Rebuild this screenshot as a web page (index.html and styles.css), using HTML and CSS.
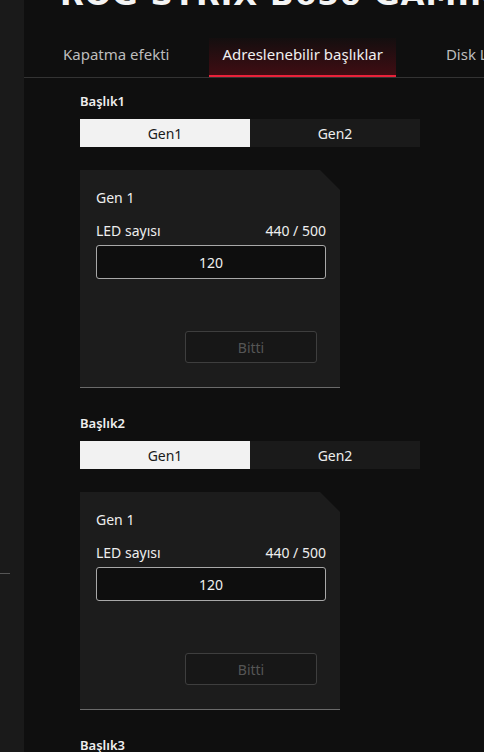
FILE: index.html
```html
<!DOCTYPE html>
<html>
<head>
<meta charset="utf-8">
<link rel="stylesheet" href="styles.css">
</head>
<body>
<div class="app">
  <aside class="sidebar"><div class="side-line"></div></aside>
  <main class="main">
    <header class="title-bar"><div class="title">ROG STRIX B650 GAMING</div></header>
    <nav class="tabs">
      <div class="tab t1">Kapatma efekti</div>
      <div class="tab active">Adreslenebilir başlıklar</div>
      <div class="tab t3">Disk LED</div>
    </nav>
    <div class="content">
      <section class="block">
        <div class="head">Başlık1</div>
        <div class="seg"><div class="seg-item on">Gen1</div><div class="seg-item">Gen2</div></div>
        <div class="card">
          <div class="card-title">Gen 1</div>
          <div class="row"><span>LED sayısı</span><span>440 / 500</span></div>
          <div class="input">120</div>
          <div class="btn-row"><div class="btn">Bitti</div></div>
        </div>
      </section>
      <section class="block">
        <div class="head">Başlık2</div>
        <div class="seg"><div class="seg-item on">Gen1</div><div class="seg-item">Gen2</div></div>
        <div class="card">
          <div class="card-title">Gen 1</div>
          <div class="row"><span>LED sayısı</span><span>440 / 500</span></div>
          <div class="input">120</div>
          <div class="btn-row"><div class="btn">Bitti</div></div>
        </div>
      </section>
      <section class="block">
        <div class="head">Başlık3</div>
      </section>
    </div>
  </main>
</div>
</body>
</html>
```
FILE: styles.css
```css
html, body {
  margin: 0;
  padding: 0;
  background: #0f0f0f;
  overflow: hidden;
}
body {
  font-family: "Noto Sans", "Open Sans", sans-serif;
  color: #e8e8e8;
  width: 484px;
  height: 752px;
}
.app {
  display: flex;
  height: 752px;
}
.sidebar {
  width: 24px;
  flex: none;
  background: #1a1a1a;
  position: relative;
}
.side-line {
  position: absolute;
  left: 0;
  top: 573px;
  width: 10px;
  height: 1px;
  background: #555;
}
.main {
  flex: 1;
  min-width: 0;
  overflow: hidden;
  background: #0f0f0f;
}
.title-bar {
  height: 38px;
  overflow: hidden;
}
.title {
  font-family: "DejaVu Sans", sans-serif;
  font-weight: bold;
  font-size: 31px;
  line-height: 32px;
  letter-spacing: 1px;
  white-space: nowrap;
  color: #f4f4f4;
  margin-top: -22px;
  padding-left: 36px;
}
.tabs {
  display: flex;
  height: 39px;
  border-bottom: 1px solid #333;
  padding-left: 26px;
  white-space: nowrap;
}
.tab {
  font-size: 15px;
  color: #bdbdbd;
  padding: 0 13px;
  display: flex;
  align-items: center;
  height: 39px;
  box-sizing: border-box;
  padding-bottom: 8px;
}
.tab.t1 { margin-right: 27px; }
.tab.active {
  color: #f0f0f0;
  background: linear-gradient(to bottom, rgba(60,10,15,0.1), rgba(80,12,20,0.75));
  border-bottom: 2px solid #e8223a;
  padding-bottom: 6px;
  margin-right: 37px;
}
.content {
  padding-left: 56px;
  padding-top: 14px;
}
.block {
  width: 340px;
  margin-bottom: 26px;
}
.head {
  font-size: 13px;
  font-weight: 600;
  color: #eeeeee;
  line-height: 18px;
  margin-bottom: 9px;
}
.seg {
  display: flex;
  height: 28px;
}
.seg-item {
  flex: 1;
  background: #1a1a1a;
  color: #eeeeee;
  font-size: 14px;
  display: flex;
  align-items: center;
  justify-content: center;
}
.seg-item.on {
  background: #f2f2f2;
  color: #1a1a1a;
}
.card {
  margin-top: 23px;
  width: 260px;
  height: 218px;
  box-sizing: border-box;
  background: #1c1c1c;
  border-bottom: 1px solid #6a6a6a;
  clip-path: polygon(0 0, calc(100% - 20px) 0, 100% 20px, 100% 100%, 0 100%);
  padding: 18px 14px 0 16px;
}
.card-title {
  font-size: 14px;
  line-height: 20px;
  color: #eeeeee;
}
.row {
  display: flex;
  justify-content: space-between;
  font-size: 14px;
  line-height: 20px;
  margin-top: 13px;
  color: #eeeeee;
}
.input {
  margin-top: 4px;
  height: 34px;
  box-sizing: border-box;
  border: 1px solid #a8a8a8;
  border-radius: 3px;
  background: #0e0e0e;
  color: #f0f0f0;
  font-size: 14px;
  display: flex;
  align-items: center;
  justify-content: center;
}
.btn-row {
  display: flex;
  justify-content: flex-end;
  margin-top: 52px;
  padding-right: 9px;
}
.btn {
  width: 132px;
  height: 32px;
  box-sizing: border-box;
  border: 1px solid #3e3e3e;
  border-radius: 3px;
  background: #171717;
  color: #555;
  font-size: 14px;
  display: flex;
  align-items: center;
  justify-content: center;
}
```
